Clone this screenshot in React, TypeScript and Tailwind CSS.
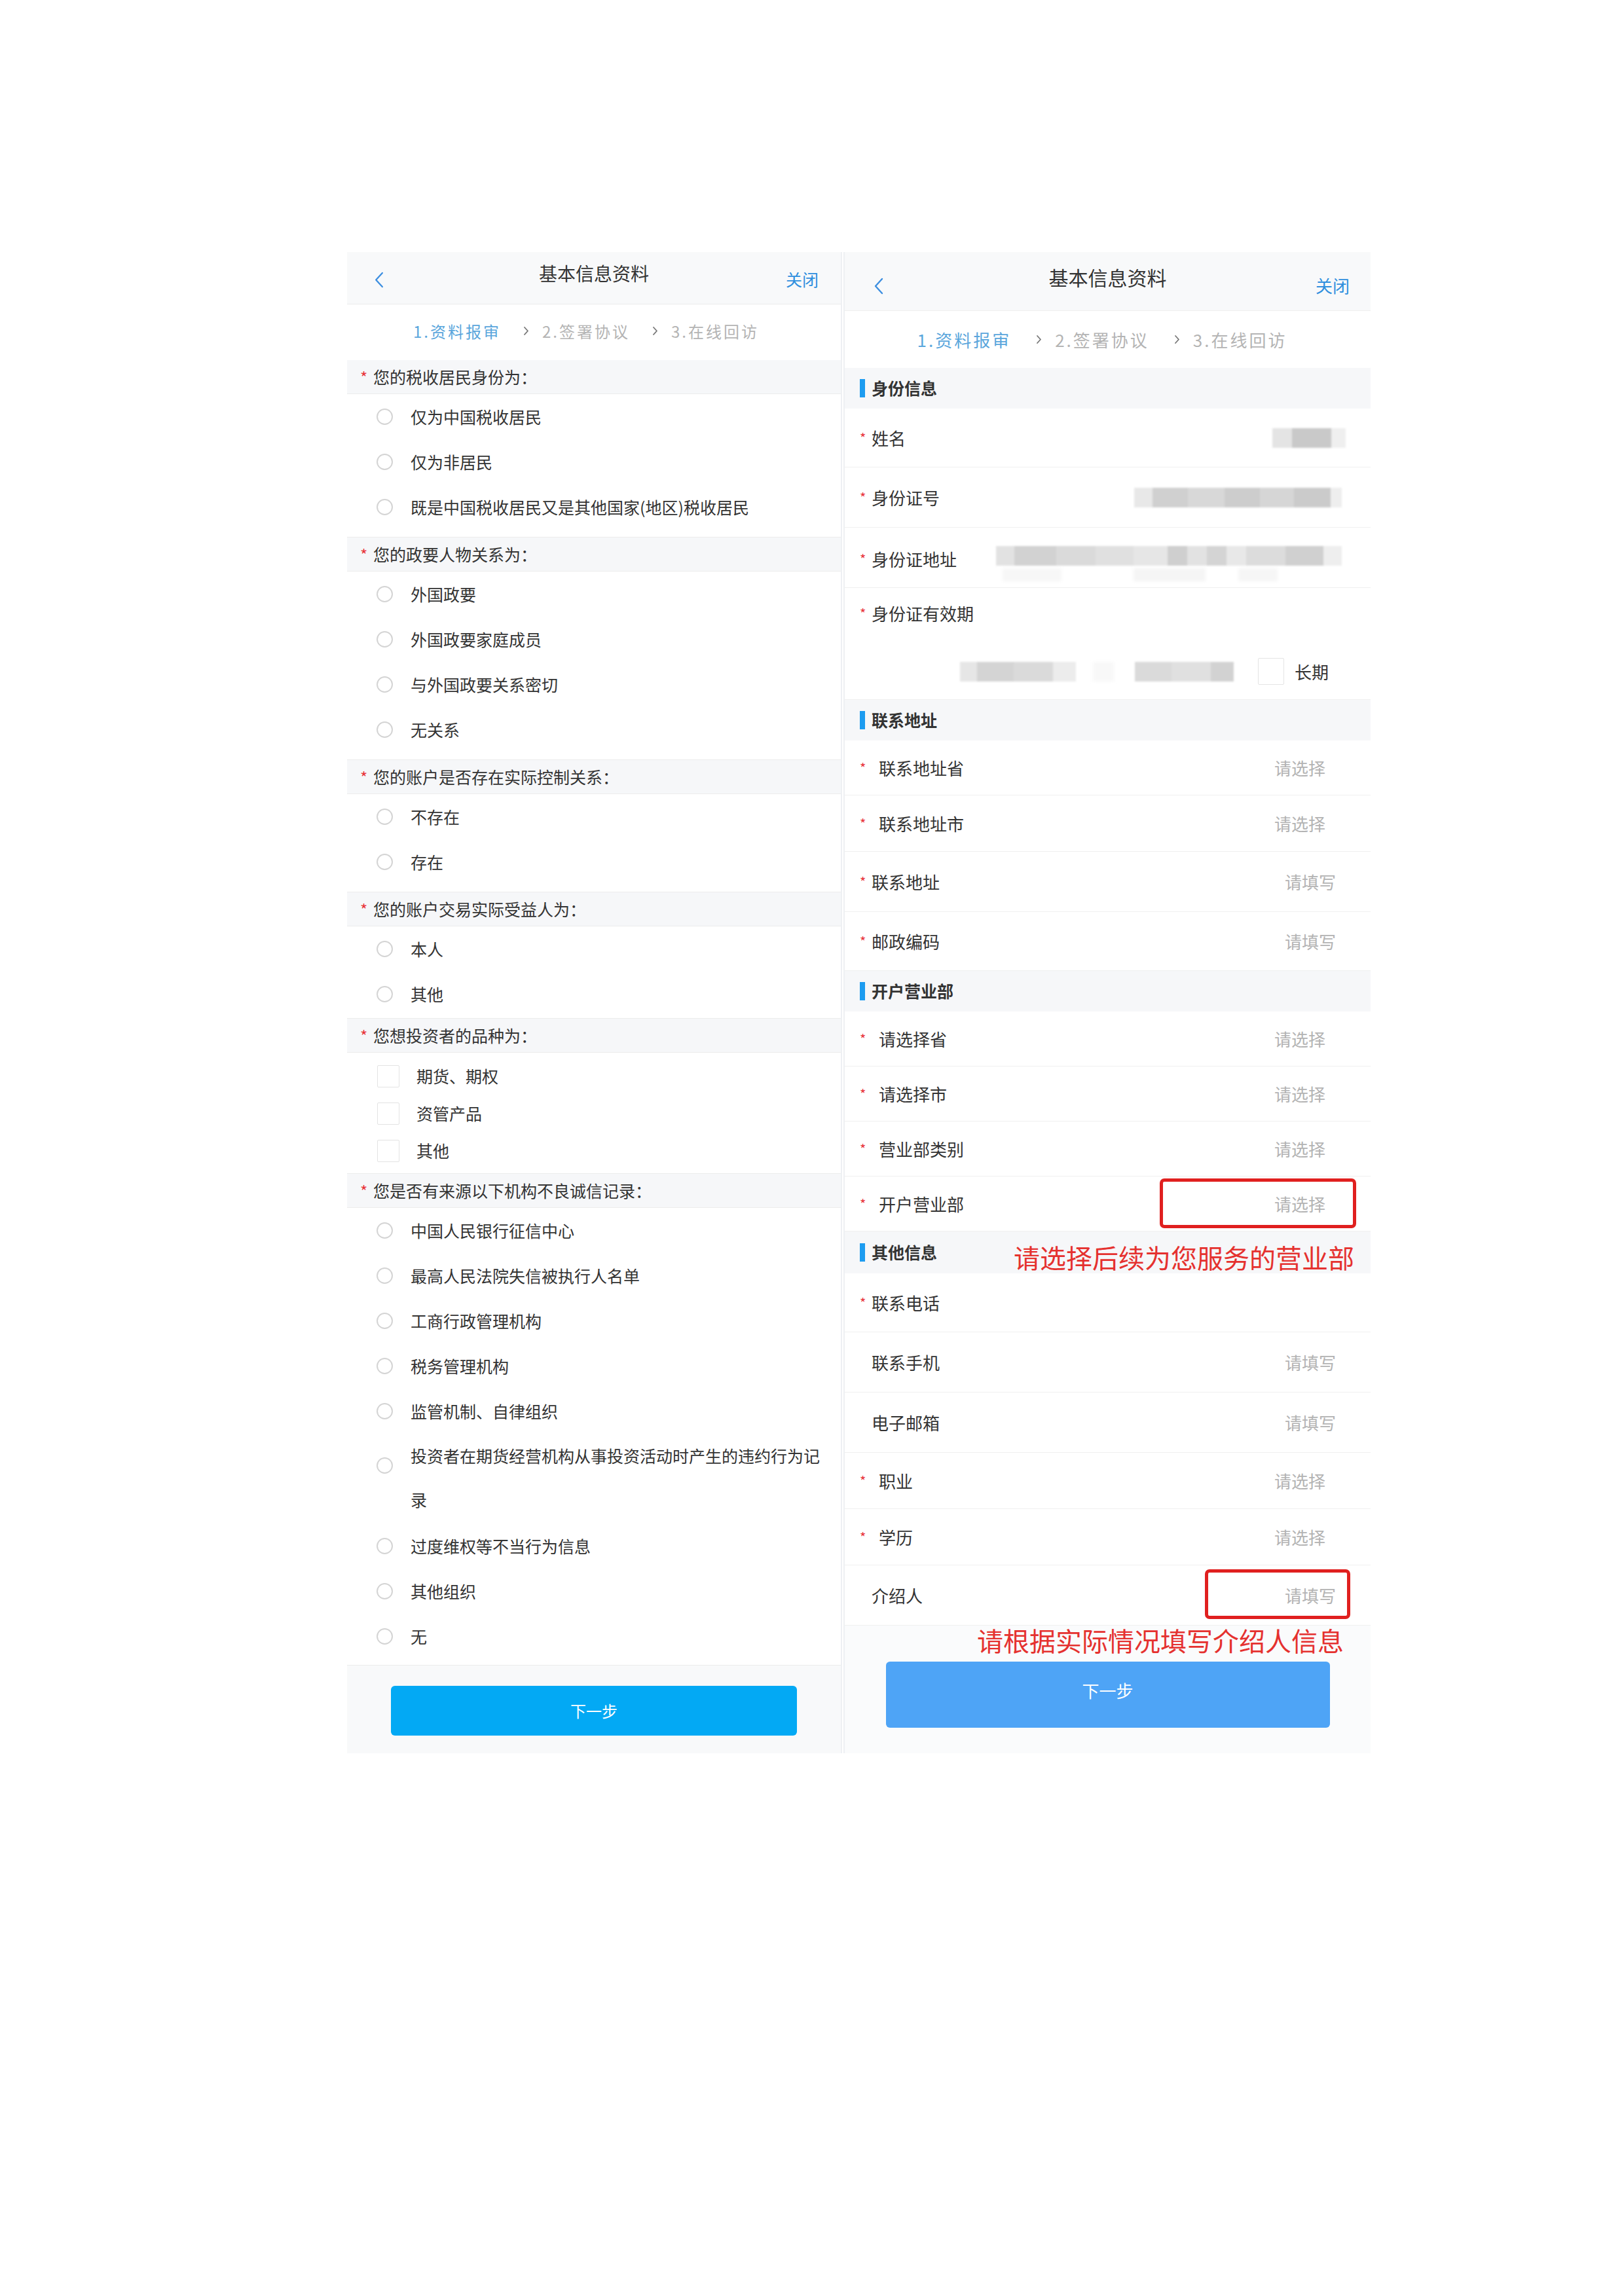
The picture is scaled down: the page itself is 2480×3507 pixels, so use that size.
import React from 'react';

type Group = { title: string; kind: 'radio' | 'check'; options: string[]; pb: string };

const groups: Group[] = [
  { title: '您的税收居民身份为：', kind: 'radio', pb: 'pb-[11px]', options: ['仅为中国税收居民', '仅为非居民', '既是中国税收居民又是其他国家(地区)税收居民'] },
  { title: '您的政要人物关系为：', kind: 'radio', pb: 'pb-[11px]', options: ['外国政要', '外国政要家庭成员', '与外国政要关系密切', '无关系'] },
  { title: '您的账户是否存在实际控制关系：', kind: 'radio', pb: 'pb-[11px]', options: ['不存在', '存在'] },
  { title: '您的账户交易实际受益人为：', kind: 'radio', pb: 'pb-[2px]', options: ['本人', '其他'] },
  { title: '您想投资者的品种为：', kind: 'check', pb: 'pb-[6px]', options: ['期货、期权', '资管产品', '其他'] },
  {
    title: '您是否有来源以下机构不良诚信记录：',
    kind: 'radio',
    pb: 'pb-[9px]',
    options: [
      '中国人民银行征信中心',
      '最高人民法院失信被执行人名单',
      '工商行政管理机构',
      '税务管理机构',
      '监管机制、自律组织',
      '投资者在期货经营机构从事投资活动时产生的违约行为记录',
      '过度维权等不当行为信息',
      '其他组织',
      '无',
    ],
  },
];

const BackIcon = ({ className }: { className: string }) => (
  <svg className={className} viewBox="0 0 14 26" fill="none">
    <polyline points="12,2 2,13 12,24" stroke="#3d8fe0" strokeWidth="2.4" strokeLinecap="round" strokeLinejoin="round" />
  </svg>
);

const StepArrow = () => (
  <svg className="w-[9px] h-[15px]" viewBox="0 0 9 15" fill="none">
    <polyline points="2,2 7,7.5 2,13" stroke="#777" strokeWidth="1.8" strokeLinecap="round" strokeLinejoin="round" />
  </svg>
);

const Steps = ({ big }: { big?: boolean }) => {
  const text = big ? 'text-[26px] tracking-[3px]' : 'text-[24px] tracking-[3px]';
  const arrow = big ? 'ml-[38px] mr-[20px]' : 'ml-[34px] mr-[20px]';
  return (
    <div className={`flex items-center justify-center ${big ? 'h-[87px] pr-[17px]' : 'h-[85px] pr-[24px] pb-[4px]'}`}>
      <span className={`${text} text-[#5aa6dc]`}>1.资料报审</span>
      <span className={arrow}><StepArrow /></span>
      <span className={`${text} text-[#b4b4b4]`}>2.签署协议</span>
      <span className={arrow}><StepArrow /></span>
      <span className={`${text} text-[#b4b4b4]`}>3.在线回访</span>
    </div>
  );
};

const LeftPanel = () => (
  <div className="w-[756px] bg-white border-r-2 border-[#eef0f3] flex flex-col">
    <div className="h-[80px] bg-[#f8f9fa] border-b border-[#ececec] grid grid-cols-[1fr_auto_1fr] items-center">
      <div className="pl-[42px] pt-[6px]">
        <BackIcon className="w-[14px] h-[25px]" />
      </div>
      <div className="text-[28px] text-[#333] mb-[16px]">基本信息资料</div>
      <div className="text-right pr-[34px] pt-[4px] text-[25px] text-[#2f8fde]">关闭</div>
    </div>
    <Steps />
    {groups.map((g, gi) => (
      <div key={gi} className="border-b border-[#ececec]">
        <div className="h-[52px] bg-[#f6f7f9] border-b border-[#ececec] flex items-center pl-[20px] text-[25px] text-[#333]">
          <span className="inline-block w-[20px] text-[24px] text-[#e8333a]">*</span>
          {g.title}
        </div>
        {g.kind === 'radio' ? (
          <div className={g.pb}>
            {g.options.map((o) =>
              o.length > 24 ? (
                <div key={o} className="flex items-start pl-[45px] pb-[3px]">
                  <span className="mt-[36px] w-[25px] h-[25px] rounded-full border-2 border-[#d4d4d4] shrink-0" />
                  <span className="ml-[27px] w-[632px] text-[25px] leading-[67px] text-[#333]">{o}</span>
                </div>
              ) : (
                <div key={o} className="h-[69px] flex items-center pl-[45px]">
                  <span className="w-[25px] h-[25px] rounded-full border-2 border-[#d4d4d4] shrink-0" />
                  <span className="ml-[27px] text-[25px] text-[#333]">{o}</span>
                </div>
              )
            )}
          </div>
        ) : (
          <div className={`pt-[7px] ${g.pb}`}>
            {g.options.map((o) => (
              <div key={o} className="h-[57px] flex items-center pl-[46px]">
                <span className="w-[34px] h-[34px] rounded-[2px] border-[1.5px] border-[#e3e3e3] shrink-0" />
                <span className="ml-[26px] text-[25px] text-[#333]">{o}</span>
              </div>
            ))}
          </div>
        )}
      </div>
    ))}
    <div className="flex-1 bg-[#f8f9fa] pt-[31px] pb-[27px] flex justify-center">
      <button className="w-[620px] h-[76px] rounded-[6px] bg-[#03a9f4] text-white text-[24px]">下一步</button>
    </div>
  </div>
);

const SectionTitle = ({ title, h }: { title: string; h: string }) => (
  <div className={`${h} bg-[#f6f7f9] flex items-center pl-[23px]`}>
    <span className="w-[8px] h-[28px] bg-[#1d9cf0]" />
    <span className="ml-[10px] text-[25px] font-bold text-[#333]">{title}</span>
  </div>
);

type Field = {
  label: string;
  star?: 'tight' | 'wide';
  value?: 'select' | 'fill';
  h: string;
};

const Label = ({ label, star }: { label: string; star?: 'tight' | 'wide' }) => (
  <div className="flex items-center pl-[23px] text-[26px] text-[#333]">
    {star ? (
      <span className={`inline-block ${star === 'wide' ? 'w-[29px]' : 'w-[18px]'} text-[20px] text-[#e8333a]`}>*</span>
    ) : (
      <span className="inline-block w-[18px]" />
    )}
    {label}
  </div>
);

const FieldRow = ({ f }: { f: Field }) => (
  <div className={`${f.h} flex items-center justify-between border-b border-[#f0f0f0]`}>
    <Label label={f.label} star={f.star} />
    {f.value === 'select' && <span className="pr-[69px] text-[26px] text-[#b3b3b3]">请选择</span>}
    {f.value === 'fill' && <span className="pr-[53px] text-[26px] text-[#b3b3b3]">请填写</span>}
  </div>
);

const Blur = ({ parts }: { parts: [string, string][] }) => (
  <div className="flex h-[30px] blur-[1.5px]">
    {parts.map(([w, c], i) => (
      <span key={i} className={`${w} ${c} h-full`} />
    ))}
  </div>
);

const RightPanel = () => (
  <div className="relative w-[805px] bg-white border-l-2 border-[#eef0f3] flex flex-col">
    <div className="h-[90px] bg-[#f8f9fa] border-b border-[#efefef] grid grid-cols-[1fr_auto_1fr] items-center">
      <div className="pl-[45px] pt-[14px]">
        <BackIcon className="w-[14px] h-[26px]" />
      </div>
      <div className="text-[30px] text-[#333] mb-[12px]">基本信息资料</div>
      <div className="text-right pr-[32px] pt-[12px] text-[26px] text-[#2f8fde]">关闭</div>
    </div>
    <Steps big />

    <SectionTitle title="身份信息" h="h-[62px]" />
    <div className="h-[90px] flex items-center justify-between border-b border-[#f0f0f0]">
      <Label label="姓名" star="tight" />
      <div className="pr-[38px]">
        <Blur parts={[['w-[30px]', 'bg-[#e4e4e4]'], ['w-[60px]', 'bg-[#c9c9c9]'], ['w-[22px]', 'bg-[#efefef]']]} />
      </div>
    </div>
    <div className="h-[92px] flex items-center justify-between border-b border-[#f0f0f0]">
      <Label label="身份证号" star="tight" />
      <div className="pr-[44px]">
        <Blur
          parts={[
            ['w-[28px]', 'bg-[#e8e8e8]'],
            ['w-[54px]', 'bg-[#d0d0d0]'],
            ['w-[56px]', 'bg-[#d8d8d8]'],
            ['w-[54px]', 'bg-[#cdcdcd]'],
            ['w-[52px]', 'bg-[#d6d6d6]'],
            ['w-[56px]', 'bg-[#cbcbcb]'],
            ['w-[17px]', 'bg-[#eeeeee]'],
          ]}
        />
      </div>
    </div>
    <div className="h-[92px] flex items-start justify-between border-b border-[#f0f0f0] pt-[28px]">
      <Label label="身份证地址" star="tight" />
      <div className="pr-[44px] flex flex-col gap-[4px]">
        <Blur
          parts={[
            ['w-[28px]', 'bg-[#e2e2e2]'],
            ['w-[64px]', 'bg-[#d2d2d2]'],
            ['w-[60px]', 'bg-[#dadada]'],
            ['w-[58px]', 'bg-[#e0e0e0]'],
            ['w-[52px]', 'bg-[#e6e6e6]'],
            ['w-[30px]', 'bg-[#cfcfcf]'],
            ['w-[30px]', 'bg-[#e2e2e2]'],
            ['w-[30px]', 'bg-[#d4d4d4]'],
            ['w-[30px]', 'bg-[#e8e8e8]'],
            ['w-[60px]', 'bg-[#dcdcdc]'],
            ['w-[58px]', 'bg-[#d0d0d0]'],
            ['w-[28px]', 'bg-[#eeeeee]'],
          ]}
        />
        <div className="flex h-[20px] blur-[2px]">
          <span className="w-[90px] bg-[#f7f7f7] ml-[10px]" />
          <span className="w-[110px] ml-[110px] bg-[#f5f5f5]" />
          <span className="w-[60px] ml-[50px] bg-[#f6f6f6]" />
        </div>
      </div>
    </div>
    <div className="h-[171px] border-b border-[#f0f0f0] flex flex-col">
      <div className="h-[77px] flex items-center">
        <Label label="身份证有效期" star="tight" />
      </div>
      <div className="flex-1 flex items-center justify-end pr-[64px] pt-[8px]">
        <div className="flex h-[30px] blur-[1.5px]">
          <span className="w-[26px] bg-[#e6e6e6]" />
          <span className="w-[56px] bg-[#d4d4d4]" />
          <span className="w-[60px] bg-[#dadada]" />
          <span className="w-[35px] bg-[#ececec]" />
        </div>
        <span className="ml-[26px] w-[32px] h-[30px] bg-[#f8f8f8] blur-[2px]" />
        <div className="ml-[32px] flex h-[30px] blur-[1.5px]">
          <span className="w-[56px] bg-[#dadada]" />
          <span className="w-[60px] bg-[#e0e0e0]" />
          <span className="w-[35px] bg-[#d2d2d2]" />
        </div>
        <span className="ml-[37px] w-[40px] h-[41px] border-[1.5px] border-[#e4e4e4] rounded-[2px]" />
        <span className="ml-[16px] text-[26px] text-[#333]">长期</span>
      </div>
    </div>

    <SectionTitle title="联系地址" h="h-[62px]" />
    <FieldRow f={{ label: '联系地址省', star: 'wide', value: 'select', h: 'h-[84px]' }} />
    <FieldRow f={{ label: '联系地址市', star: 'wide', value: 'select', h: 'h-[86px]' }} />
    <FieldRow f={{ label: '联系地址', star: 'tight', value: 'fill', h: 'h-[92px]' }} />
    <FieldRow f={{ label: '邮政编码', star: 'tight', value: 'fill', h: 'h-[90px]' }} />

    <SectionTitle title="开户营业部" h="h-[62px]" />
    <FieldRow f={{ label: '请选择省', star: 'wide', value: 'select', h: 'h-[84px]' }} />
    <FieldRow f={{ label: '请选择市', star: 'wide', value: 'select', h: 'h-[84px]' }} />
    <FieldRow f={{ label: '营业部类别', star: 'wide', value: 'select', h: 'h-[84px]' }} />
    <FieldRow f={{ label: '开户营业部', star: 'wide', value: 'select', h: 'h-[84px]' }} />

    <SectionTitle title="其他信息" h="h-[64px]" />
    <FieldRow f={{ label: '联系电话', star: 'tight', h: 'h-[90px]' }} />
    <FieldRow f={{ label: '联系手机', value: 'fill', h: 'h-[92px]' }} />
    <FieldRow f={{ label: '电子邮箱', value: 'fill', h: 'h-[92px]' }} />
    <FieldRow f={{ label: '职业', star: 'wide', value: 'select', h: 'h-[86px]' }} />
    <FieldRow f={{ label: '学历', star: 'wide', value: 'select', h: 'h-[86px]' }} />
    <FieldRow f={{ label: '介绍人', value: 'fill', h: 'h-[92px]' }} />

    <div className="flex-1 bg-[#fafbfc] pt-[55px] flex justify-center">
      <button className="w-[678px] h-[101px] rounded-[6px] bg-[#4ea4f6] text-white text-[26px] pb-[14px]">下一步</button>
    </div>

    {/* red annotations drawn over the form */}
    <div className="absolute left-[481px] top-[1415px] w-[300px] h-[76px] border-[5px] border-[#e0201f] rounded-[7px]" />
    <div className="absolute left-[258px] top-[1510px] text-[40px] leading-[50px] text-[#e5312f] whitespace-nowrap">
      请选择后续为您服务的营业部
    </div>
    <div className="absolute left-[550px] top-[2012px] w-[222px] h-[76px] border-[5px] border-[#e0201f] rounded-[7px]" />
    <div className="absolute left-[202px] top-[2095px] text-[40px] leading-[50px] text-[#e5312f] whitespace-nowrap">
      请根据实际情况填写介绍人信息
    </div>
  </div>
);

export default function App() {
  return (
    <div className="w-[2480px] h-[3507px] bg-white font-['Noto_Sans_CJK_SC','Noto_Sans',sans-serif]">
      <div className="pt-[385px] pl-[530px] flex items-stretch gap-[2px]">
        <LeftPanel />
        <RightPanel />
      </div>
    </div>
  );
}
